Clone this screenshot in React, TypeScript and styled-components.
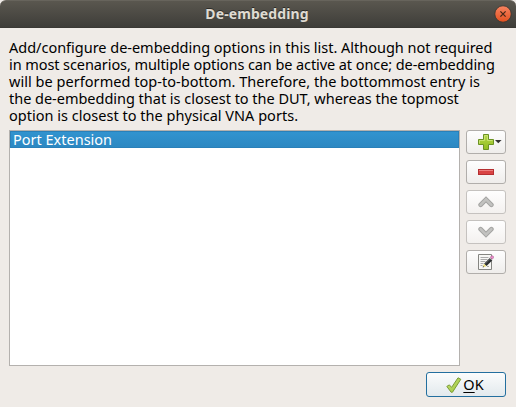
import React from "react";
import styled, { createGlobalStyle } from "styled-components";

const GlobalStyle = createGlobalStyle`
  * { box-sizing: border-box; }
  body { margin: 0; background: #efebe7; }
`;

const Dialog = styled.div`
  width: 516px;
  height: 407px;
  display: flex;
  flex-direction: column;
  overflow: hidden;
  background: #efebe7;
  color: #000;
  font: 14.5px/17px "Noto Sans", "Open Sans", sans-serif;
`;

const TitleBar = styled.header`
  height: 28px;
  flex: none;
  display: grid;
  grid-template-columns: 20px 1fr 22px;
  align-items: center;
  background: linear-gradient(#5a574f, #3e3d39);
  border-top: 1px solid #67645c;
  border-bottom: 1px solid #3a3935;
  border-radius: 6px 6px 0 0;
`;

const Title = styled.h1`
  grid-column: 2;
  margin: 0;
  padding-bottom: 1px;
  text-align: center;
  font-size: 14px;
  line-height: 20px;
  font-weight: 700;
  letter-spacing: 0.1px;
  color: #dfdbd2;
  text-shadow: 0 -1px 0 #2c2b28;
`;

const CloseButton = styled.button`
  width: 18px;
  height: 18px;
  padding: 0;
  border: 0;
  background: none;
  display: flex;
`;

const Description = styled.p`
  margin: 11px 9px 6px;
  flex: none;
`;

const Line = styled.span<{ $spacing: number }>`
  display: block;
  height: 17px;
  white-space: nowrap;
  letter-spacing: ${(p) => p.$spacing}px;
`;

const Body = styled.main`
  display: flex;
  gap: 6px;
  height: 236px;
  margin: 0 9px;
  flex: none;
`;

const List = styled.ul`
  width: 451px;
  margin: 0;
  padding: 0;
  list-style: none;
  background: #fff;
  border: 1px solid #b4b1ae;
`;

const ListItem = styled.li`
  height: 17px;
  padding-left: 2px;
  line-height: 15px;
  color: #fff;
  background: linear-gradient(#3193cf, #2c88c2);
  border: 1px solid #2980b9;
`;

const Tools = styled.div`
  display: flex;
  flex-direction: column;
  gap: 6px;
`;

const ToolButton = styled.button<{ $disabled?: boolean }>`
  width: 40px;
  height: 24px;
  flex: none;
  padding: 0;
  display: flex;
  align-items: center;
  justify-content: center;
  border: 1px solid ${(p) => (p.$disabled ? "#c5c2bf" : "#b1aeab")};
  border-radius: 3px;
  background: linear-gradient(#fefefe, ${(p) => (p.$disabled ? "#f3f1ef" : "#efedeb")});
`;

const Footer = styled.footer`
  display: flex;
  justify-content: flex-end;
  padding: 6px 10px 0;
`;

const OkButton = styled.button`
  width: 80px;
  height: 25px;
  padding: 0 2px 0 0;
  display: flex;
  align-items: center;
  justify-content: center;
  gap: 1px;
  color: #000;
  border: 1px solid #236f9f;
  border-radius: 3px;
  background: linear-gradient(#fbfcfc, #e2e9ed);
  font: 14.5px/18px "Noto Sans", sans-serif;
`;

const ButtonLabel = styled.span`
  padding-bottom: 2px;
`;

const Mnemonic = styled.span`
  text-decoration: underline;
  text-decoration-thickness: 1px;
  text-underline-offset: 2px;
`;

const Icon = styled.svg`
  display: block;
  flex: none;
`;

const CloseIcon = () => (
  <Icon width="18" height="18" viewBox="0 0 18 18">
    <defs>
      <linearGradient id="close" x1="0" y1="0" x2="0" y2="1">
        <stop offset="0" stopColor="#f88461" />
        <stop offset="1" stopColor="#e2501f" />
      </linearGradient>
    </defs>
    <circle cx="9" cy="9" r="8.2" fill="url(#close)" stroke="#35332f" strokeWidth=".8" />
    <path d="M6.4 6.4l5.2 5.2M11.6 6.4l-5.2 5.2" stroke="#462718" strokeWidth="1.3" />
  </Icon>
);

const AddIcon = () => (
  <Icon width="38" height="22" viewBox="0 0 38 22">
    <defs>
      <linearGradient id="add" x1="0" y1="0" x2="0" y2="1">
        <stop offset="0" stopColor="#b7d84b" />
        <stop offset="1" stopColor="#91bd20" />
      </linearGradient>
    </defs>
    <path d="M16.5 3.5h5v5h5v5h-5v5h-5v-5h-5v-5h5z" fill="url(#add)" stroke="#6b9223" />
    <path d="M17.5 9.5v-5h3v5h5M12.5 12.5v-3h5" fill="none" stroke="#d0e77d" opacity=".8" />
    <path d="M28 9h6.6l-3.3 3.2z" fill="#333" />
  </Icon>
);

const RemoveIcon = () => (
  <Icon width="16" height="6" viewBox="0 0 16 6">
    <rect x=".5" y=".5" width="15" height="5" fill="#d94444" stroke="#b52f31" />
    <path d="M1 1.5h14" stroke="#ed8080" />
  </Icon>
);

const ChevronIcon = ({ down = false }: { down?: boolean }) => (
  <Icon width="16" height="12" viewBox="0 0 16 12">
    <g transform={down ? "matrix(1 0 0 -1 0 12)" : undefined} fill="none" strokeLinejoin="miter" strokeLinecap="round">
      <path d="M2.6 8.8L8 3.4 13.4 8.8" stroke="#a4a4a2" strokeWidth="4.6" />
      <path d="M2.6 8.8L8 3.4 13.4 8.8" stroke="#c2c2c0" strokeWidth="2.6" />
    </g>
  </Icon>
);

const EditIcon = () => (
  <Icon width="16" height="16" viewBox="0 0 16 16">
    <path d="M.5.5h13v15H.5z" fill="#f7f7f5" stroke="#858581" />
    <path d="M2.5 3.5h8M2.5 5.5h7M2.5 7.5h5M2.5 9.5h3M2.5 11.5h2M9 12.5h2" stroke="#aaa" />
    <path d="M7.3 10.9L13 5.2" stroke="#2b2e2f" strokeWidth="3.4" />
    <path d="M7.4 9.8l4.8-4.8" stroke="#707575" strokeWidth=".7" />
    <path d="M11.6 3.8l2.5 2.5" stroke="#b9bdba" strokeWidth="1" />
    <path d="M12.2 3.2l1-1q1-1 2 0t0 2l-1 1z" fill="#e88bc8" stroke="#ae6297" strokeWidth=".6" />
    <path d="M6 9.8l2.4 2.4-2.8.9q-1 .1-.5-1z" fill="#eadb70" />
    <path d="M5 12l-.3 1.4 1.4-.3z" fill="#333" />
  </Icon>
);

const CheckIcon = () => (
  <Icon width="16" height="16" viewBox="0 0 16 16">
    <defs>
      <linearGradient id="check" x1="0" y1="0" x2="1" y2="1">
        <stop offset="0" stopColor="#c8e27a" />
        <stop offset="1" stopColor="#9bc638" />
      </linearGradient>
    </defs>
    <path d="M.8 9.4l2.6-1.5 2.2 2.5L12 .8l2.8 1.5-8.3 12.9-1.3.1z" fill="url(#check)" stroke="#7a9b36" strokeLinejoin="round" />
  </Icon>
);

const description = [
  { text: "Add/configure de-embedding options in this list. Although not required", spacing: -0.015 },
  { text: "in most scenarios, multiple options can be active at once; de-embedding", spacing: -0.085 },
  { text: "will be performed top-to-bottom. Therefore, the bottommost entry is", spacing: 0.04 },
  { text: "the de-embedding that is closest to the DUT, whereas the topmost", spacing: -0.02 },
  { text: "option is closest to the physical VNA ports.", spacing: 0.02 },
];

export default function App() {
  return (
    <>
      <GlobalStyle />
      <Dialog>
        <TitleBar>
          <Title>De-embedding</Title>
          <CloseButton aria-label="Close"><CloseIcon /></CloseButton>
        </TitleBar>
        <Description>
          {description.map((line) => (
            <Line key={line.text} $spacing={line.spacing}>{line.text}</Line>
          ))}
        </Description>
        <Body>
          <List><ListItem>Port Extension</ListItem></List>
          <Tools>
            <ToolButton aria-label="Add"><AddIcon /></ToolButton>
            <ToolButton aria-label="Remove"><RemoveIcon /></ToolButton>
            <ToolButton $disabled aria-label="Move up"><ChevronIcon /></ToolButton>
            <ToolButton $disabled aria-label="Move down"><ChevronIcon down /></ToolButton>
            <ToolButton aria-label="Edit"><EditIcon /></ToolButton>
          </Tools>
        </Body>
        <Footer>
          <OkButton><CheckIcon /><ButtonLabel><Mnemonic>O</Mnemonic>K</ButtonLabel></OkButton>
        </Footer>
      </Dialog>
    </>
  );
}
